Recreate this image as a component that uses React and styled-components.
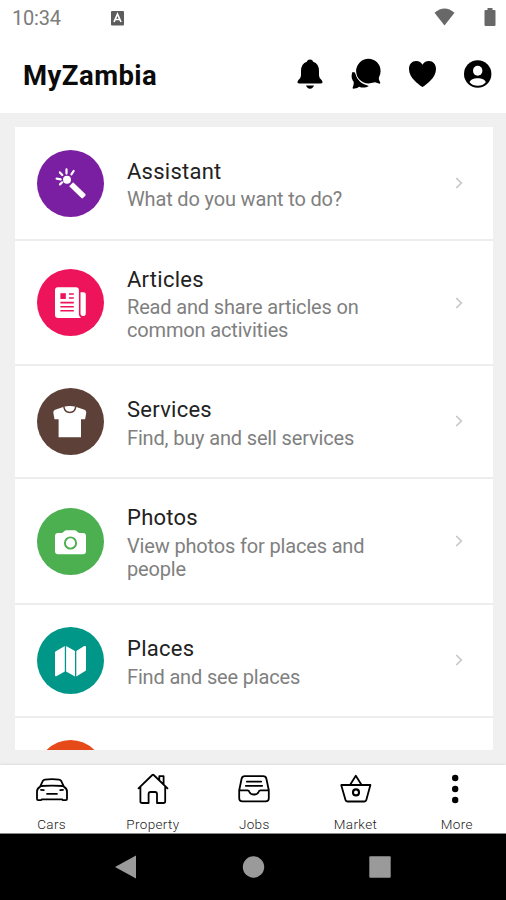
import React from 'react';
import styled, { createGlobalStyle } from 'styled-components';

const GlobalStyle = createGlobalStyle`
  * { box-sizing: border-box; }
  body { margin: 0; background: #f0f0f0; font-family: Roboto, sans-serif; }
`;
const Screen = styled.div`
  width: 506px; height: 900px; display: flex; flex-direction: column;
  overflow: hidden; background: #f0f0f0;
`;
const StatusBar = styled.div`
  height: 36px; flex: none; display: flex; align-items: center;
  padding: 0 10px 0 12px; background: #fff; color: #7c7c7c;
`;
const Clock = styled.span`
  width: 99px; font-size: 20px; line-height: 24px; letter-spacing: -0.2px;
`;
const StatusIcons = styled.div`
  margin-left: auto; display: flex; align-items: center; gap: 29px; margin-top: -2px;
`;
const Header = styled.header`
  height: 77px; flex: none; background: #fff; display: flex; align-items: center;
  justify-content: space-between; padding: 0 7px 0 23px;
`;
const Title = styled.h1`
  margin: 3px 0 0; font-size: 27.5px; line-height: 32px; font-weight: 700; color: #0b0b0b;
  letter-spacing: 0.45px;
`;
const Actions = styled.div`
  display: flex; gap: 14px; color: #000;
`;
const Content = styled.main`
  flex: none; height: 652px; padding: 14px 13.5px 15.5px 14.5px; background: #f0f0f0;
`;
const Card = styled.div`
  height: 622.5px; overflow: hidden; background: #fff;
`;
const Row = styled.div`
  height: ${(p) => p.$height}px; display: flex; align-items: center; padding-left: 22.5px;
  border-bottom: 2px solid #ededed;
`;
const Badge = styled.div`
  width: 67px; height: 67px; flex: none; border-radius: 50%; background: ${(p) => p.$color};
  color: ${(p) => p.$color}; display: flex; margin-top: 0.5px;
`;
const Copy = styled.div`
  margin-left: 23px; width: 270px; padding-top: 3px;
`;
const RowTitle = styled.div`
  font-size: 22px; line-height: 28px; letter-spacing: 0.25px; color: #222; font-weight: 400;
`;
const RowText = styled.div`
  margin-top: 2.5px; font-size: 20px; line-height: 23px; letter-spacing: -0.16px; color: #808080;
  font-weight: 400;
`;
const ChevronBox = styled.span`
  margin-left: 58px; width: 8px; height: 12px; display: flex;
`;
const TabBar = styled.nav`
  height: 69px; flex: none; background: #fff; display: grid; grid-template-columns: repeat(5, 101.3px);
  padding: 0 0 0 1px; border-bottom: 1px solid #888; box-shadow: 0 -1px 2px #dedede;
`;
const Tab = styled.div`
  display: flex; flex-direction: column; align-items: center; padding-top: 6px; color: #000;
`;
const TabLabel = styled.span`
  margin-top: 8.5px; font-size: 13.5px; line-height: 16px; letter-spacing: 0.35px; color: #222;
  font-weight: 300;
`;
const SystemNav = styled.div`
  flex: 1; background: #000; display: flex; justify-content: center; align-items: center;
  gap: 103px;
`;

const ActionSvg = styled.svg.attrs({ width: 42, height: 42, viewBox: '0 0 42 42', fill: 'currentColor' })`
  display: block;
`;
const BadgeSvg = styled.svg.attrs({ width: 67, height: 67, viewBox: '0 0 67 67', fill: '#fff' })`
  display: block;
`;

const BellIcon = () => (
  <ActionSvg>
    <path d="M21 5.5 Q23.6 5.5 24.2 7.7 Q30 9.7 30 17 V21.5 Q30 24 32.8 26.2 Q34.8 29.5 31.5 29.5 H10.5 Q7.2 29.5 9.2 26.2 Q12 24 12 21.5 V17 Q12 9.7 17.8 7.7 Q18.4 5.5 21 5.5Z M17 31.6 H25 Q24 34.7 21 34.7 Q18 34.7 17 31.6Z" />
  </ActionSvg>
);
const ChatIcon = () => (
  <ActionSvg>
    <path d="M7.5 18 C5.8 22 6.8 25.5 8.7 27.8 C9 30.4 8.1 32.4 7.5 34 Q7.8 35 9.6 34.6 Q12.4 34 14.2 32.7 C17.4 34.2 21.2 33.6 23.8 31.9 Q13 30 9.9 18.6Z" />
    <path d="M23.4 4.8 A12.2 12.2 0 0 1 35.6 17 Q35.6 20.2 34.1 23 Q33.4 24.4 34.2 26.2 L35.3 28.8 Q35.2 30 33.9 29.6 L30.8 28.4 Q29.9 28.1 28.8 28.6 Q26.5 29.4 23.4 29.4 A12.3 12.3 0 0 1 23.4 4.8Z" stroke="#fff" strokeWidth="1.3" paintOrder="stroke" />
  </ActionSvg>
);
const HeartIcon = () => (
  <ActionSvg>
    <path d="M21.5 33 C17.5 30.2 8 23.8 8 14.9 C8 10.4 11.1 7.1 15 7.1 C18.3 7.1 20.3 8.8 21.5 10.7 C22.7 8.8 24.7 7.1 28 7.1 C31.9 7.1 35 10.4 35 14.9 C35 23.8 25.5 30.2 21.5 33Z" />
  </ActionSvg>
);
const ContactIcon = () => (
  <ActionSvg>
    <circle cx="20.7" cy="20" r="13.7" />
    <ellipse cx="20.7" cy="16.8" rx="4.7" ry="5" fill="#fff" />
    <path d="M12.6 28.3 C13.4 25.5 16.8 24.3 20.7 24.3 C24.6 24.3 28 25.5 28.8 28.3 C27 30.7 24 31.8 20.7 31.8 C17.4 31.8 14.4 30.7 12.6 28.3Z" fill="#fff" />
  </ActionSvg>
);

const WandIcon = () => (
  <BadgeSvg>
    <circle cx="30" cy="29.8" r="4" />
    <path d="M36.1 32.2 L48.3 44.1 Q49 44.9 48.3 45.7 L46 48.1 Q45.2 48.8 44.4 48.1 L32.2 36.2Z" />
    <path d="M29.5 19.4 V23.6 M36.6 21 L34.4 24.4 M22.9 22.4 L25.3 24.9 M19.6 28.7 L23.7 29.3 M23 34.4 L25.2 32.3" stroke="#fff" strokeWidth="2.2" strokeLinecap="round" />
  </BadgeSvg>
);
const PaperIcon = () => (
  <BadgeSvg>
    <path d="M20.8 18.3 H39 Q41.9 18.3 41.9 21.2 V45.3 Q41.9 47.6 44 49 H21.2 Q18 49 18 45.8 V21.2 Q18 18.3 20.8 18.3Z" />
    <path d="M43.5 23.2 H46.4 Q48.8 23.2 48.8 25.6 V44.2 Q48.8 47 46.2 47 Q43.5 47 43.5 44.2Z" />
    <rect x="23.4" y="24.2" width="5.4" height="5.8" fill="currentColor" />
    <path d="M32 25 H36.8 M32 29 H36.8 M23.4 33.6 H36.8 M23.4 37.7 H36.8 M23.4 41.8 H36.8" stroke="currentColor" strokeWidth="1.6" />
  </BadgeSvg>
);
const ShirtIcon = () => (
  <BadgeSvg>
    <path d="M26.2 18.9 L18.2 21.8 Q16.3 22.6 16.3 24.6 L17.5 31.2 L21.6 31.3 V49.2 H44 V31.3 L48.1 31.2 L49.3 24.6 Q49.3 22.6 47.4 21.8 L39.4 18.9 Q36 17.9 32.8 17.9 Q29.6 17.9 26.2 18.9Z" />
    <path d="M26.8 18.7 Q27.8 24.5 32.8 24.5 Q37.8 24.5 38.8 18.7" fill="none" stroke="currentColor" strokeWidth="1.5" />
  </BadgeSvg>
);
const CameraIcon = () => (
  <BadgeSvg>
    <path d="M21 25 H24.4 Q26 25 27 23.6 Q28 22.2 29.6 22.2 H37.4 Q39 22.2 40 23.6 Q41 25 42.6 25 H46 Q49 25 49 28 V43.2 Q49 46.2 46 46.2 H21 Q18 46.2 18 43.2 V28 Q18 25 21 25Z" />
    <circle cx="33.5" cy="35" r="5.6" fill="none" stroke="currentColor" strokeWidth="1.9" />
  </BadgeSvg>
);
const MapIcon = () => (
  <BadgeSvg>
    <path d="M18.4 24.6 L27.8 18.9 V44.4 L19.8 49 Q18 49.6 18 47.9 V25.4Z M29.1 18.9 L38 24 V49.4 L29.1 44.4Z M39.3 24 L47.2 19.1 Q49 18.5 49 20.2 V42.9 L48.6 43.7 L39.3 49.4Z" />
  </BadgeSvg>
);

const outline = { fill: 'none', stroke: 'currentColor', strokeWidth: 1.8, strokeLinejoin: 'round', strokeLinecap: 'round' };

const CarIcon = () => (
  <svg width="36" height="36" viewBox="0 0 36 36" {...outline}>
    <path d="M6 15.9 L8.6 10.3 Q9.3 9 10.8 8.7 Q18 7.6 25.2 8.7 Q26.7 9 27.4 10.3 L30 15.9 Q33 17.6 33 20.6 V28 Q33 29.2 31.8 29.2 H29.4 Q28.4 29.2 28.3 28.3 H7.7 Q7.6 29.2 6.6 29.2 H4.2 Q3 29.2 3 28 V20.6 Q3 17.6 6 15.9Z" />
    <path d="M6.8 15 Q18 14.2 29.2 15 M7 18.9 L9.8 19.2 M29 18.9 L26.2 19.2 M13 22.8 H23" />
  </svg>
);
const HomeIcon = () => (
  <svg width="36" height="36" viewBox="0 0 36 36" {...outline}>
    <path d="M3.5 17.4 L17.3 4 Q18 3.4 18.7 4 L32.5 17.4 M5.4 15.7 V30.2 Q5.4 32 7.2 32 H13.6 V23 Q13.6 21 15.6 21 H20 Q22 21 22 23 V32 H28.4 Q30.2 32 30.2 30.2 V15.7 M24.3 8.8 V5.2 H28.6 V13" />
  </svg>
);
const TrayIcon = () => (
  <svg width="36" height="36" viewBox="0 0 36 36" {...outline}>
    <path d="M3.2 19.3 L5.6 7.8 Q6.2 5.2 8.8 5.2 H27.2 Q29.8 5.2 30.4 7.8 L32.8 19.3 V27 Q32.8 30.4 29.4 30.4 H6.6 Q3.2 30.4 3.2 27Z M3.2 19.3 H11.5 Q13 19.3 13.3 20.7 Q14.3 23.5 18 23.5 Q21.7 23.5 22.7 20.7 Q23 19.3 24.5 19.3 H32.8 M10.8 10.6 H25.2 M9.8 14.8 H26.2" />
  </svg>
);
const BasketIcon = () => (
  <svg width="36" height="36" viewBox="0 0 36 36" {...outline}>
    <path d="M3.2 14 H32.4 L28.3 29.1 Q27.9 30.5 26.5 30.5 H9.3 Q7.9 30.5 7.5 29.1Z M12 14 L17.8 4.8 L23.6 14" />
    <circle cx="18" cy="21.4" r="3" strokeWidth="2.1" />
  </svg>
);
const MoreIcon = () => (
  <svg width="36" height="36" viewBox="0 0 36 36" fill="currentColor">
    <circle cx="16.2" cy="7" r="3.2" /><circle cx="16.2" cy="18" r="3.2" /><circle cx="16.2" cy="29" r="3.2" />
  </svg>
);
const Chevron = () => (
  <ChevronBox>
    <svg width="8" height="12" viewBox="0 0 8 12" fill="none" stroke="#c7c7cc" strokeWidth="1.7">
      <path d="M1.2 1 L6.3 6 L1.2 11" />
    </svg>
  </ChevronBox>
);

const rows = [
  { title: 'Assistant', text: 'What do you want to do?', color: '#7b1fa2', Icon: WandIcon, height: 114 },
  { title: 'Articles', text: 'Read and share articles on common activities', color: '#ed145b', Icon: PaperIcon, height: 125 },
  { title: 'Services', text: 'Find, buy and sell services', color: '#5d4037', Icon: ShirtIcon, height: 112.5 },
  { title: 'Photos', text: 'View photos for places and people', color: '#4caf50', Icon: CameraIcon, height: 126.5 },
  { title: 'Places', text: 'Find and see places', color: '#009688', Icon: MapIcon, height: 112.5 },
];
const tabs = [
  ['Cars', CarIcon], ['Property', HomeIcon], ['Jobs', TrayIcon], ['Market', BasketIcon], ['More', MoreIcon],
];

export default function App() {
  return (
    <Screen>
      <GlobalStyle />
      <StatusBar>
        <Clock>10:34</Clock>
        <svg width="14" height="15" viewBox="0 0 14 15">
          <rect width="13" height="14.5" rx="1" fill="#5c5c5c" />
          <path d="M3 11 L6.5 3 L10 11 M4.4 8.5 H8.6" fill="none" stroke="#fff" strokeWidth="1.7" />
        </svg>
        <StatusIcons>
          <svg width="21" height="18" viewBox="0 0 21 18"><path d="M0.5 4.8 Q10.5 -3.8 20.5 4.8 L10.5 17.5Z" fill="#686868" /></svg>
          <svg width="12" height="18" viewBox="0 0 12 18"><path d="M1.5 2 H3.5 V0 H8.5 V2 H10.5 Q11.5 2 11.5 3 V17 Q11.5 18 10.5 18 H1.5 Q0.5 18 0.5 17 V3 Q0.5 2 1.5 2Z" fill="#686868" /></svg>
        </StatusIcons>
      </StatusBar>
      <Header>
        <Title>MyZambia</Title>
        <Actions>
          <BellIcon />
          <ChatIcon />
          <HeartIcon />
          <ContactIcon />
        </Actions>
      </Header>
      <Content>
        <Card>
          {rows.map(({ title, text, color, Icon, height }) => (
            <Row key={title} $height={height}>
              <Badge $color={color}><Icon /></Badge>
              <Copy>
                <RowTitle>{title}</RowTitle>
                <RowText>{text}</RowText>
              </Copy>
              <Chevron />
            </Row>
          ))}
          <Row $height={112.5}><Badge $color="#e64a19" /></Row>
        </Card>
      </Content>
      <TabBar>
        {tabs.map(([label, Icon]) => (
          <Tab key={label}><Icon /><TabLabel>{label}</TabLabel></Tab>
        ))}
      </TabBar>
      <SystemNav>
        <svg width="24" height="26" viewBox="0 0 24 26"><path d="M1 13 L22 1.5 V24.5Z" fill="#9a9a9a" /></svg>
        <svg width="24" height="24" viewBox="0 0 24 24"><circle cx="12.5" cy="12" r="10.7" fill="#9a9a9a" /></svg>
        <svg width="24" height="24" viewBox="0 0 24 24"><rect x="1.3" y="1.3" width="21.4" height="21.4" rx="1" fill="#9a9a9a" /></svg>
      </SystemNav>
    </Screen>
  );
}
